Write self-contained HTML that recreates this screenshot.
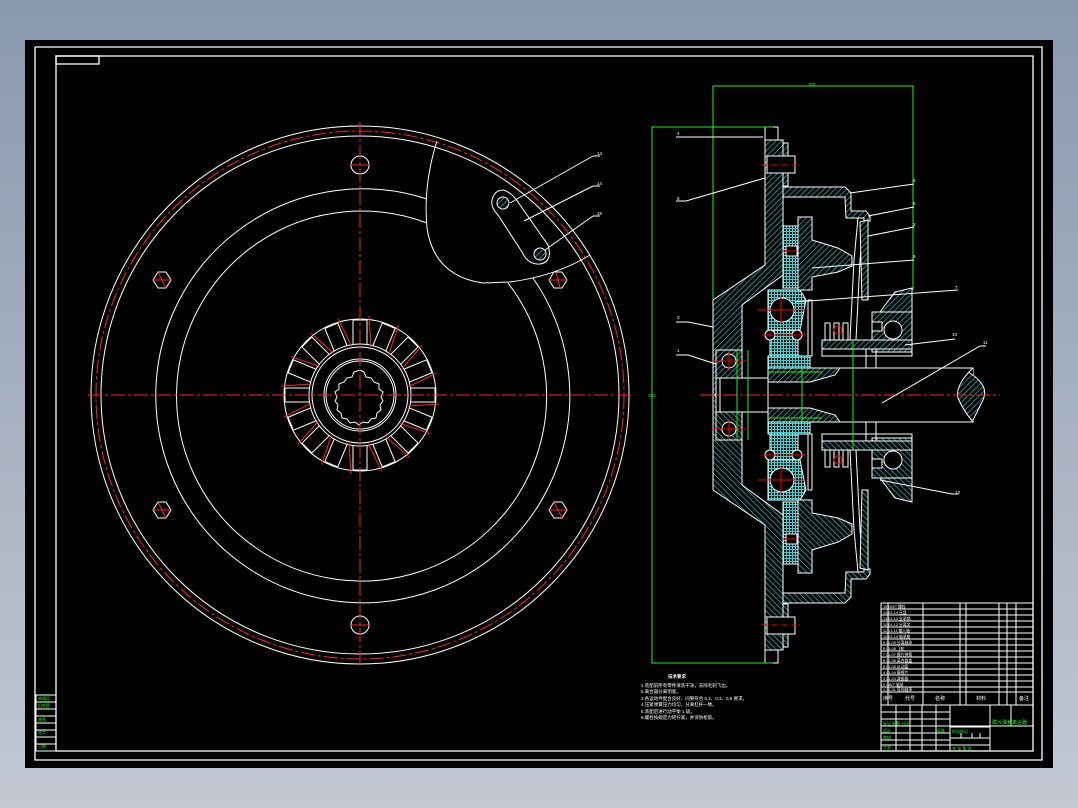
<!DOCTYPE html>
<html><head><meta charset="utf-8"><style>
html,body{margin:0;padding:0;width:1078px;height:808px;overflow:hidden;background:linear-gradient(#8999ae,#c3c8d3);}
svg{display:block}
text{font-family:"Liberation Sans","Noto Sans CJK SC",sans-serif;}
</style></head><body>
<svg width="1078" height="808" viewBox="0 0 1078 808" xmlns="http://www.w3.org/2000/svg">
<defs>
<pattern id="h" width="4" height="4" patternUnits="userSpaceOnUse" patternTransform="rotate(45)"><rect width="4" height="4" fill="#000"/><line x1="0" y1="0" x2="0" y2="4" stroke="#2dd" stroke-width="1.2"/></pattern>
<pattern id="hx" width="3" height="3" patternUnits="userSpaceOnUse"><rect width="3" height="3" fill="#000"/><rect width="3" height="1" fill="#2dd"/><rect width="1" height="3" fill="#2dd"/></pattern>
<g id="slot"><line x1="353" y1="320" x2="353" y2="345" stroke="#fff"/><line x1="367" y1="320" x2="367" y2="345" stroke="#fff"/><line x1="353" y1="320" x2="367" y2="320" stroke="#fff"/><line x1="369" y1="316" x2="371" y2="347" stroke="#f22"/></g>
<g id="half" stroke="#fff" stroke-width="1">
 <polygon points="765,140 783,140 783,275 742,305 742,350 716,350 716,395 713,395 713,300 765,265" fill="url(#h)"/>
 <rect x="765" y="127" width="13" height="13" fill="#000"/>
 <rect x="783" y="143" width="5" height="43" fill="url(#h)"/>
 <rect x="767" y="156" width="28" height="17" fill="#000"/>
 <line x1="762" y1="165" x2="800" y2="165" stroke="#f00" stroke-dasharray="5,2,1,2"/>
 <polygon points="783,187 845,187 851,193 851,211 866,211 870,216 870,221 864,221 864,218 846,218 845,197 783,197" fill="url(#h)"/>
 <rect x="783" y="226" width="15" height="62" fill="url(#hx)"/>
 <rect x="786" y="246" width="11" height="10" fill="#000"/>
 <line x1="781" y1="251" x2="800" y2="251" stroke="#f00"/>
 <polygon points="798,217 812,217 812,240 838,248 852,256 852,266 838,272 812,277 812,290 798,290" fill="url(#h)"/>
 <polyline points="858,218 854,260 852,300 850,340" fill="none"/>
 <polyline points="864,220 860,260 858,300 856,340" fill="none"/>
 <polygon points="860,222 868,220 868,300 862,300" fill="url(#h)"/>
 <polygon points="768,290 800,290 806,300 800,330 768,330" fill="url(#hx)"/>
 <circle cx="782" cy="310" r="12" fill="#000"/>
 <line x1="758" y1="310" x2="805" y2="310" stroke="#f00"/>
 <line x1="781" y1="296" x2="781" y2="324" stroke="#f00"/>
 <rect x="770" y="330" width="28" height="26" fill="url(#hx)"/>
 <circle cx="770" cy="335" r="5" fill="#000"/><circle cx="797" cy="335" r="5" fill="#000"/>
 <line x1="762" y1="335" x2="805" y2="335" stroke="#f00"/>
 <rect x="768" y="356" width="42" height="12" fill="url(#hx)"/>
 <rect x="808" y="300" width="4" height="56" fill="none"/>
 <polygon points="895,292 912,288 912,312 880,312" fill="url(#h)"/>
 <rect x="872" y="312" width="40" height="40" fill="url(#h)"/>
 <circle cx="893" cy="330" r="9" fill="#000"/>
 <rect x="872" y="322" width="10" height="9" fill="#000"/>
 <rect x="822" y="340" width="90" height="9" fill="url(#h)"/>
 <rect x="822" y="349" width="90" height="7" fill="none"/>
 <rect x="825" y="323" width="5" height="17" fill="none"/><rect x="834" y="323" width="5" height="17" fill="none"/><rect x="843" y="323" width="5" height="17" fill="none"/>
 <circle cx="838" cy="330" r="4" fill="none" stroke="#f00"/>
 <line x1="866" y1="349" x2="866" y2="368"/><line x1="876" y1="349" x2="876" y2="368"/>
 <rect x="716" y="350" width="26" height="28" fill="url(#h)"/>
 <circle cx="729" cy="361" r="7" fill="#000"/>
 <line x1="712" y1="361" x2="746" y2="361" stroke="#f00"/><line x1="729" y1="352" x2="729" y2="371" stroke="#f00"/>
</g>
</defs>
<rect x="25" y="40" width="1028" height="728" fill="#000"/>
<g fill="none" stroke="#fff" stroke-width="1.3">
 <polyline points="35,47 1042,47 1042,760 35,760 35,47"/>
 <rect x="56" y="56" width="977" height="695"/>
 <rect x="56" y="56" width="43" height="8"/>
</g>
<g fill="none" stroke="#fff" stroke-width="1">
 <circle cx="360" cy="395" r="269"/>
 <circle cx="360" cy="395" r="259"/>
 <circle cx="360" cy="395" r="264" stroke="#f22" stroke-dasharray="14,3,3,3"/>
 <path d="M427,199 A207,207 0 1 0 533,278"/>
 <path d="M427,223 A185,185 0 1 0 508,283"/>
 <path d="M437,141 Q423,185 427,228 Q434,276 483,283 L510,282 Q556,276 590,255"/>
 <path d="M494,195 Q497,190 503,190 Q512,192 520,205 L548,245 Q553,262 540,264 Q528,265 522,252 L498,215 Q488,205 494,195 Z"/>
 <circle cx="503" cy="203" r="6" fill="url(#h)"/><circle cx="540" cy="254" r="6" fill="url(#h)"/>
 <line x1="510" y1="203" x2="593" y2="156"/><line x1="524" y1="221" x2="593" y2="186"/><line x1="545" y1="250" x2="593" y2="216"/>
 <line x1="593" y1="156" x2="600" y2="156"/><line x1="593" y1="186" x2="600" y2="186"/><line x1="593" y1="216" x2="600" y2="216"/>
 <circle cx="360" cy="165" r="9"/><circle cx="360" cy="625" r="9"/>
 <polygon points="158,272 166,272 171,280 166,288 158,288 153,280"/>
 <polygon points="158,502 166,502 171,510 166,518 158,518 153,510"/>
 <polygon points="554,272 562,272 567,280 562,288 554,288 549,280"/>
 <polygon points="554,502 562,502 567,510 562,518 554,518 549,510"/>
 <circle cx="360" cy="395" r="76"/><circle cx="360" cy="395" r="51"/><circle cx="360" cy="395" r="48"/>
 <circle cx="360" cy="395" r="36"/><circle cx="360" cy="395" r="34"/>
</g>
<g>
<use href="#slot" transform="rotate(0 360 395)"/><use href="#slot" transform="rotate(22.5 360 395)"/><use href="#slot" transform="rotate(45 360 395)"/><use href="#slot" transform="rotate(67.5 360 395)"/>
<use href="#slot" transform="rotate(90 360 395)"/><use href="#slot" transform="rotate(112.5 360 395)"/><use href="#slot" transform="rotate(135 360 395)"/><use href="#slot" transform="rotate(157.5 360 395)"/>
<use href="#slot" transform="rotate(180 360 395)"/><use href="#slot" transform="rotate(202.5 360 395)"/><use href="#slot" transform="rotate(225 360 395)"/><use href="#slot" transform="rotate(247.5 360 395)"/>
<use href="#slot" transform="rotate(270 360 395)"/><use href="#slot" transform="rotate(292.5 360 395)"/><use href="#slot" transform="rotate(315 360 395)"/><use href="#slot" transform="rotate(337.5 360 395)"/>
</g>
<path d="M360,370 l4,2 2,5 5,1 3,4 5,2 0,5 4,3 -2,5 2,4 -3,4 1,5 -4,3 -1,5 -5,1 -3,4 -5,-1 -4,3 -4,-3 -5,1 -3,-4 -5,-1 -1,-5 -4,-3 1,-5 -3,-4 2,-4 -2,-5 4,-3 0,-5 5,-2 3,-4 5,-1 2,-5 z" fill="none" stroke="#fff"/>
<g stroke="#f22" stroke-width="1" stroke-dasharray="14,3,3,3">
 <line x1="360" y1="122" x2="360" y2="668"/>
 <line x1="88" y1="395" x2="632" y2="395"/>
</g>
<g stroke="#f22" stroke-width="1">
 <line x1="350" y1="165" x2="370" y2="165"/><line x1="350" y1="625" x2="370" y2="625"/>
 <line x1="152" y1="280" x2="172" y2="280"/><line x1="152" y1="510" x2="172" y2="510"/>
 <line x1="548" y1="280" x2="568" y2="280"/><line x1="548" y1="510" x2="568" y2="510"/>
 <line x1="556" y1="272" x2="560" y2="288"/><line x1="158" y1="272" x2="166" y2="288"/><line x1="158" y1="502" x2="166" y2="518"/><line x1="554" y1="502" x2="562" y2="518"/>
</g>
<use href="#half"/>
<use href="#half" transform="translate(0,790) scale(1,-1)"/>
<g fill="none" stroke="#fff" stroke-width="1">
 <rect x="768" y="368" width="205" height="54" fill="#000"/>
 <path d="M973,368 Q955,385 958,398 Q963,410 973,422" fill="url(#h)"/>
 <path d="M968,372 Q990,385 983,400 Q978,410 973,420" fill="url(#h)"/>
 <polygon points="768,368 840,368 835,375 810,382 768,382" fill="url(#h)"/>
 <polygon points="768,422 840,422 835,415 810,408 768,408" fill="url(#h)"/>
 <rect x="720" y="378" width="48" height="34" fill="#000"/>
</g>
<line x1="700" y1="395" x2="1000" y2="395" stroke="#f22" stroke-dasharray="14,3,3,3"/>
<g fill="none" stroke="#2e2" stroke-width="1">
 <polyline points="773,127 652,127 652,663 773,663"/>
 <polyline points="713,300 713,86 913,86 913,290"/>
 <line x1="737" y1="350" x2="737" y2="440"/><line x1="748" y1="350" x2="748" y2="440"/>
 <line x1="802" y1="368" x2="802" y2="422"/><line x1="853" y1="340" x2="853" y2="450"/>
 <line x1="768" y1="372" x2="822" y2="372"/><line x1="768" y1="418" x2="822" y2="418"/>
</g>
<g fill="none" stroke="#fff" stroke-width="1">
 <polyline points="676,137 763,137"/><polyline points="676,201 686,201 765,178"/>
 <polyline points="676,322 688,322 713,327"/><polyline points="676,355 688,355 716,364"/>
 <polyline points="850,193 914,184"/><polyline points="868,216 914,207"/><polyline points="868,236 914,227"/>
 <polyline points="812,268 914,260"/><polyline points="795,302 958,290"/><polyline points="905,345 955,339"/>
 <polyline points="882,403 980,346 986,346"/><polyline points="880,480 952,494 958,494"/>
</g>
<g fill="#fff" font-size="4.5">
 <text x="677" y="135">4</text><text x="677" y="200">8</text><text x="677" y="319">3</text><text x="677" y="352">1</text>
 <text x="913" y="182">5</text><text x="913" y="205">6</text><text x="913" y="226">2</text><text x="913" y="258">9</text>
 <text x="955" y="289">7</text><text x="952" y="336">10</text><text x="983" y="344">11</text><text x="955" y="494">12</text>
 <text x="597" y="155">13</text><text x="597" y="185">14</text><text x="597" y="215">15</text>
 <text x="808" y="86" fill="#2e2">700</text><text x="648" y="397" fill="#2e2">350</text>
</g>
<g fill="#fff" font-size="4.5">
 <text x="668" y="678" font-weight="bold">技术要求</text>
 <text x="641" y="687">1.装配前所有零件清洗干净，去除毛刺飞边。</text>
 <text x="641" y="693">2.离合器分离彻底。</text>
 <text x="641" y="700">3.各运动件配合良好，间隙符合 0.2、0.3、0.5 要求。</text>
 <text x="641" y="706">4.压紧弹簧压力均匀，分离杠杆一致。</text>
 <text x="641" y="713">5.装配后进行动平衡 1 级。</text>
 <text x="641" y="719">6.螺栓按规定力矩拧紧，并涂防松胶。</text>
</g>
<g stroke="#fff" stroke-width="1" fill="none">
 <rect x="881" y="603" width="152" height="148"/>
 <path d="M881,609H1033M881,615H1033M881,621H1033M881,627H1033M881,633H1033M881,639H1033M881,645H1033M881,651H1033M881,657H1033M881,663H1033M881,669H1033M881,675H1033M881,681H1033M881,687H1033M881,692H1033M881,705H1033"/>
 <path d="M888,603V705M923,603V705M960,603V705M966,603V705M999,603V705M1007,603V705M1016,603V705"/>
 <path d="M881,712H950M881,719H950M881,726H1033M881,733H950M881,740H950M881,745H950"/>
 <path d="M896,705V751M910,705V751M922,705V751M936,705V751M950,705V751M990,705V751M950,727H990M950,738H990M950,745H990M1011,726V705"/>
 <path d="M961,733V738M972,733V738M980,733V738"/>
</g>
<g fill="#fff" font-size="3.8">
 <text x="883" y="608">15 GB/T 螺栓</text><text x="883" y="614">14 01-14 压盘</text><text x="883" y="620">13 01-13 支承销</text>
 <text x="883" y="626">12 01-12 分离叉</text><text x="883" y="632">11 01-11 输入轴</text><text x="883" y="638">10 01-10 轴承座</text>
 <text x="883" y="644">9 01-09 分离轴承</text><text x="883" y="650">8 01-08 飞轮</text><text x="883" y="656">7 01-07 膜片弹簧</text>
 <text x="883" y="662">6 01-06 离合器盖</text><text x="883" y="668">5 01-05 从动盘</text><text x="883" y="674">4 01-04 摩擦片</text>
 <text x="883" y="680">3 01-03 减振器</text><text x="883" y="686">2 GB/T 轴承</text><text x="883" y="691">1 01-01 导向轴承</text>
 <text x="883" y="700" font-size="5">序号</text><text x="905" y="700" font-size="5">代号</text><text x="935" y="700" font-size="5">名称</text><text x="976" y="700" font-size="5">材料</text><text x="1019" y="700" font-size="5">备注</text>
</g>
<g fill="#2e2" font-size="4">
 <text x="883" y="725">标记 处数 分区</text>
 <text x="883" y="732">设计</text><text x="883" y="739">审核</text><text x="883" y="749">工艺</text><text x="937" y="732">标准</text>
 <text x="952" y="733">阶段标记</text><text x="952" y="750">共 张 第 张</text>
 <text x="992" y="724" font-size="5">膜片弹簧离合器</text>
</g>
<g stroke="#fff" fill="none" stroke-width="1">
 <rect x="36" y="695" width="20" height="56"/>
 <path d="M36,702H56M36,709H56M36,716H56M36,723H56M36,730H56M36,737H56M36,744H56"/>
</g>
<g fill="#2e2" font-size="4">
 <text x="38" y="700">借通用</text><text x="38" y="707">旧底图</text><text x="38" y="721">底图</text><text x="38" y="734">签字</text><text x="38" y="748">日期</text>
</g>
</svg>
</body></html>
